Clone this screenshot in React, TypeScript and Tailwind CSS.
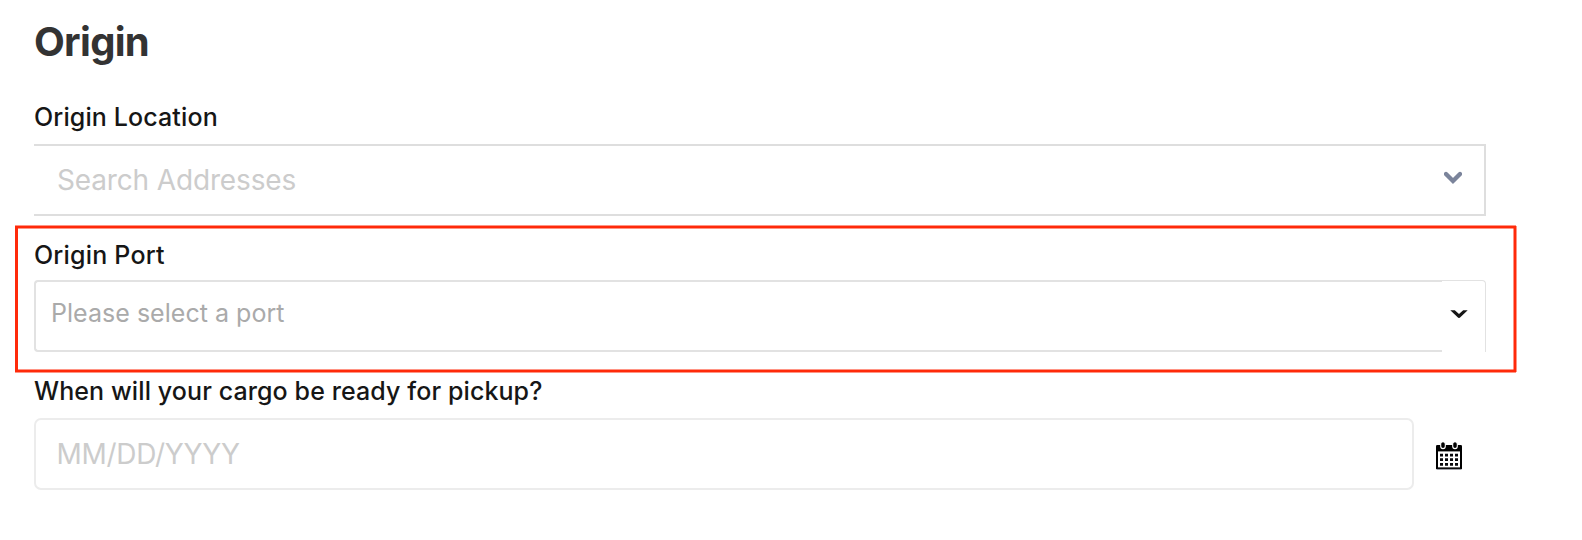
function CalendarIcon() {
  return (
    <svg width="26" height="28" viewBox="0 0 26 28" className="block">
      <path d="M0 4.3Q0 3 1.3 3H24.7Q26 3 26 4.3V27H0Z" fill="#000" />
      <path d="M2 9.4H24V25.4H2Z" fill="#fff" />
      <path d="M0.5 27.4H25.5" stroke="#8a8a94" strokeWidth="0.9" />
      <g stroke="#fff" strokeWidth="1.1" fill="#000">
        <rect x="4.7" y="-0.4" width="4.6" height="7" rx="2.3" />
        <rect x="16.7" y="-0.4" width="4.6" height="7" rx="2.3" />
      </g>
      <g stroke="#08080c" strokeWidth="2.8" strokeDasharray="3 2">
        <path d="M4 13.2H22" />
        <path d="M4 17.7H22" />
        <path d="M4 22.4H22" />
      </g>
    </svg>
  );
}

export default function App() {
  return (
    <main className="relative h-[540px] w-[1582px] overflow-hidden bg-white pl-[34px] font-['Inter',sans-serif] text-[#161616]">
      <h1 className="h-[100px] pt-[18px] text-[40px] leading-[48px] font-bold tracking-[-0.7px] whitespace-nowrap text-[#333]">
        Origin
      </h1>

      <section className="h-[136px] w-[1452px]">
        <label className="block h-[44px] pt-[1px] text-[25px] leading-[32px] font-medium tracking-[0.12px]">
          <span>Origin Location</span>
        </label>
        <div className="flex h-[72px] items-center justify-between border-y-2 border-r-2 border-[#dedede] pr-[22px] pl-[23px]">
          <span className="text-[28px] leading-[36px] tracking-[-0.15px] text-[#ccc]">Search Addresses</span>
          <svg width="18" height="14" viewBox="0 0 18 14" className="mb-[5px] block">
            <path d="M2 3L9 10L16 3" fill="none" stroke="#7b849b" strokeWidth="4.4" strokeLinecap="round" />
          </svg>
        </div>
      </section>

      <section className="h-[136px] w-[1452px]">
        <label className="block h-[44px] pt-[3px] text-[25px] leading-[32px] font-medium tracking-[0.2px]">
          <span>Origin Port</span>
        </label>
        <div className="flex h-[72px]">
          <div className="flex flex-1 items-center rounded-l-[4px] border-y-2 border-l-2 border-[#e2e2e2] pb-[6px] pl-[15px]">
            <span className="text-[25px] leading-[32px] tracking-[0.03px] text-[#aaa]">Please select a port</span>
          </div>
          <div className="flex w-[44px] items-center justify-center rounded-tr-[4px] border-t border-r border-[#e2e2e2] pr-[9px] pb-[4px]">
            <svg width="18" height="9" viewBox="0 0 18 9" className="block">
              <path d="M0.3 0.3H4.8L9 4L13.2 0.3H17.7L10.6 7Q9 9.2 7.4 7Z" fill="#161616" />
            </svg>
          </div>
        </div>
      </section>

      <section className="w-[1452px]">
        <label className="block h-[46px] pt-[3px] text-[25px] leading-[32px] font-medium tracking-[0.1px]">
          <span>When will your cargo be ready for pickup?</span>
        </label>
        <div className="flex h-[72px]">
          <div className="flex w-[1380px] items-center rounded-[7px] border-2 border-[#ececec] pl-[20.5px]">
            <span className="text-[28px] leading-[36px] tracking-[-0.3px] text-[#ccc]">MM/DD/YYYY</span>
          </div>
          <div className="pt-[24px] pl-[22px]">
            <CalendarIcon />
          </div>
        </div>
      </section>

      <div className="pointer-events-none absolute top-[226px] left-[15px] h-[146px] w-[1501px] border-2 border-l-[3px] border-[#ff2a0a] shadow-[0_-1px_0_#ff2a0a80,1px_0_0_#ff2a0a80,0_1px_0_#ff2a0a80,inset_0_1px_0_#ff2a0a80,inset_-1px_0_0_#ff2a0a80,inset_0_-1px_0_#ff2a0a80]" />
    </main>
  );
}
